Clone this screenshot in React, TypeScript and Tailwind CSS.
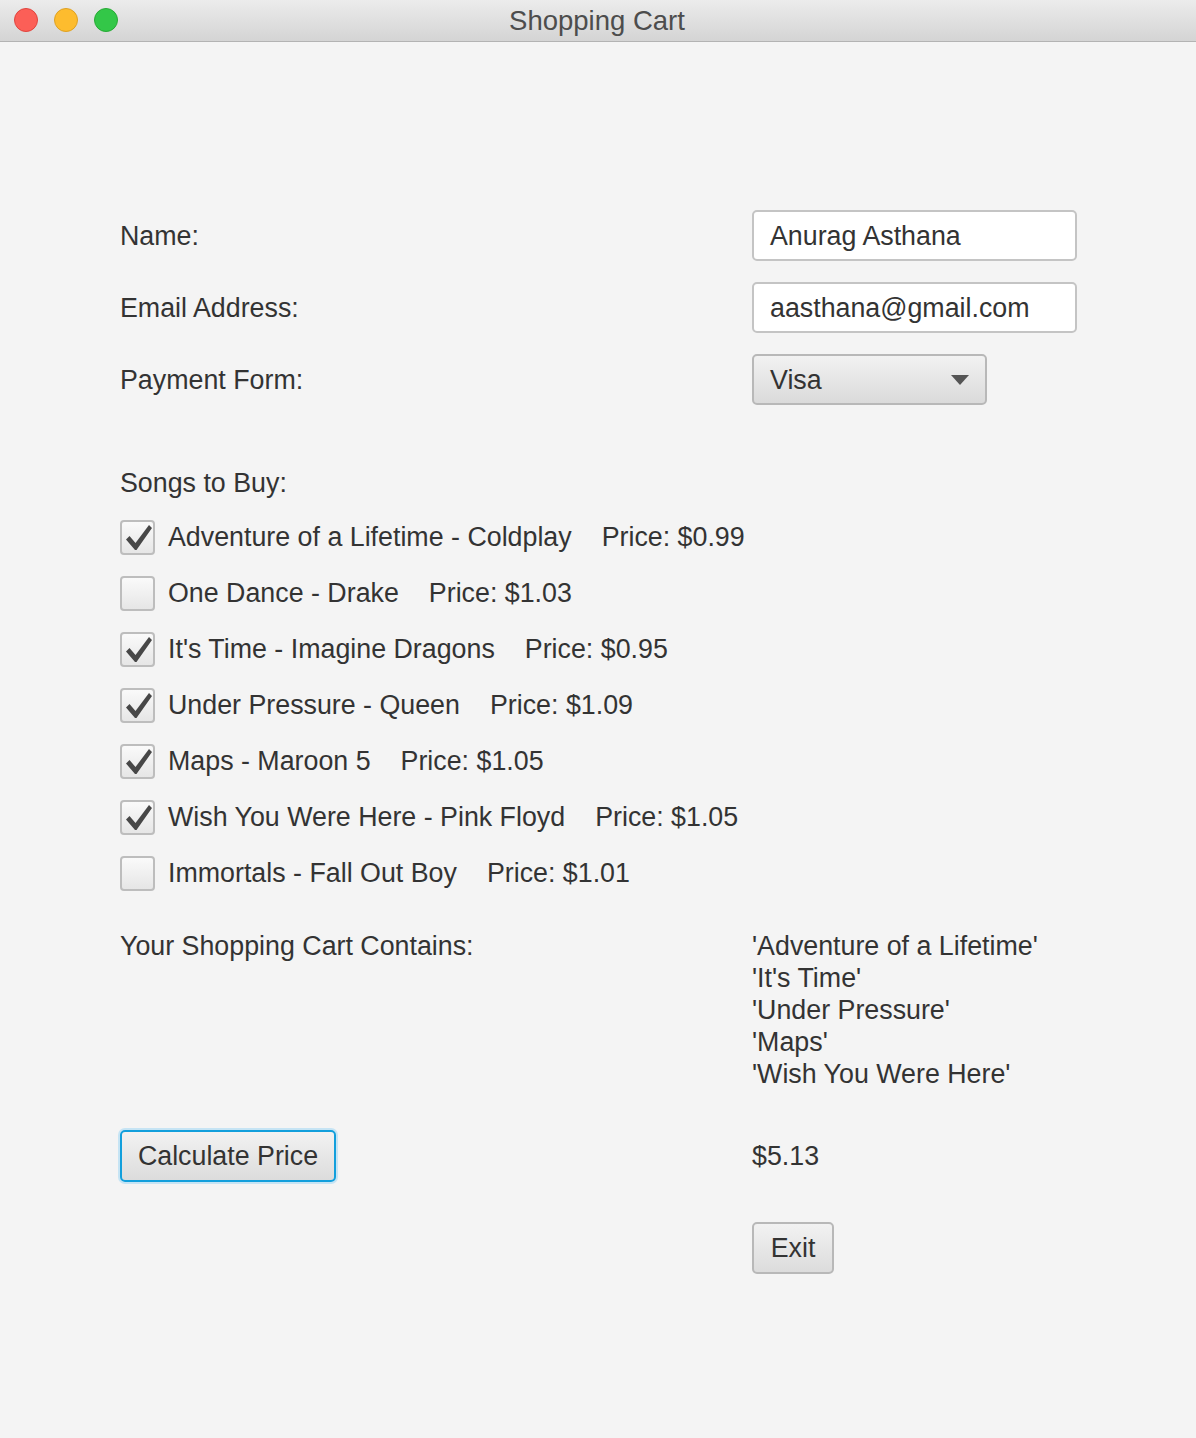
import React from "react";

const songs = [
  { label: "Adventure of a Lifetime - Coldplay", price: "$0.99", checked: true },
  { label: "One Dance - Drake", price: "$1.03", checked: false },
  { label: "It's Time - Imagine Dragons", price: "$0.95", checked: true },
  { label: "Under Pressure - Queen", price: "$1.09", checked: true },
  { label: "Maps - Maroon 5", price: "$1.05", checked: true },
  { label: "Wish You Were Here - Pink Floyd", price: "$1.05", checked: true },
  { label: "Immortals - Fall Out Boy", price: "$1.01", checked: false },
];

const cart = ["'Adventure of a Lifetime'", "'It's Time'", "'Under Pressure'", "'Maps'", "'Wish You Were Here'"];

function Checkbox({ checked }: { checked: boolean }) {
  return (
    <div className="relative w-[35px] h-[35px] rounded-[4px] border-2 border-[#bdbdbd] bg-gradient-to-b from-[#fafafa] to-[#e6e6e6] shrink-0">
      {checked && (
        <svg className="absolute left-[-2px] top-[-2px]" width="35" height="35" viewBox="0 0 35 35">
          <polygon points="6,19.5 9.5,16 15.5,23 29,5 32,8 16.5,30 15,30" fill="#474747" />
        </svg>
      )}
    </div>
  );
}

export default function App() {
  return (
    <div className="w-[1196px] h-[1438px] bg-[#f4f4f4] text-[#333333] font-['Liberation_Sans',Arial,sans-serif] text-[26.8px] leading-[32px] overflow-hidden">
      <div className="h-[42px] bg-gradient-to-b from-[#ececec] to-[#d4d4d4] border-b border-[#b3b3b3] relative flex items-center justify-center">
        <div className="absolute left-[14px] top-[8px] flex gap-[16px]">
          <div className="w-[24px] h-[24px] rounded-full bg-[#fc5f57] border border-[#e0443e]" />
          <div className="w-[24px] h-[24px] rounded-full bg-[#fdbc2e] border border-[#dea123]" />
          <div className="w-[24px] h-[24px] rounded-full bg-[#33c748] border border-[#27aa35]" />
        </div>
        <div className="text-[#4d4d4d] text-[27.5px] leading-[30px] ml-[-2px]">Shopping Cart</div>
      </div>

      <div className="pl-[120px] pt-[168px]">
        <div className="flex items-center h-[51px]">
          <div className="w-[632px]">Name:</div>
          <div className="w-[325px] h-[51px] bg-white border-2 border-[#c4c4c4] rounded-[5px] flex items-center pl-[16px]">Anurag Asthana</div>
        </div>
        <div className="flex items-center h-[51px] mt-[21px]">
          <div className="w-[632px]">Email Address:</div>
          <div className="w-[325px] h-[51px] bg-white border-2 border-[#c4c4c4] rounded-[5px] flex items-center pl-[16px]">aasthana@gmail.com</div>
        </div>
        <div className="flex items-center h-[51px] mt-[21px]">
          <div className="w-[632px]">Payment Form:</div>
          <div className="w-[235px] h-[51px] bg-gradient-to-b from-[#f2f2f2] to-[#dadada] border-2 border-[#b8b8b8] rounded-[5px] flex items-center justify-between pl-[16px] pr-[16px]">
            <span>Visa</span>
            <svg width="18" height="10" viewBox="0 0 18 10">
              <path d="M0 0 L18 0 L9 10 Z" fill="#555" />
            </svg>
          </div>
        </div>

        <div className="mt-[62px]">Songs to Buy:</div>
        <div className="mt-[10px]">
          {songs.map((s) => (
            <div key={s.label} className="h-[56px] flex items-center">
              <Checkbox checked={s.checked} />
              <span className="ml-[13px]">{s.label}</span>
              <span className="ml-[30px]">Price: {s.price}</span>
            </div>
          ))}
        </div>

        <div className="flex mt-[29px]">
          <div className="w-[632px]">Your Shopping Cart Contains:</div>
          <div>
            {cart.map((c) => (
              <div key={c}>{c}</div>
            ))}
          </div>
        </div>

        <div className="flex items-center mt-[40px]">
          <div className="w-[632px]">
            <div className="w-[216px] h-[52px] rounded-[5px] border-2 border-[#129fdc] shadow-[0_0_0_2px_#c6e4f4] bg-gradient-to-b from-[#f2f2f2] to-[#dcdcdc] flex items-center justify-center">
              Calculate Price
            </div>
          </div>
          <div>$5.13</div>
        </div>

        <div className="flex mt-[40px]">
          <div className="w-[632px]" />
          <div className="w-[82px] h-[52px] rounded-[5px] border-2 border-[#b8b8b8] bg-gradient-to-b from-[#f2f2f2] to-[#dcdcdc] flex items-center justify-center">
            Exit
          </div>
        </div>
      </div>
    </div>
  );
}
